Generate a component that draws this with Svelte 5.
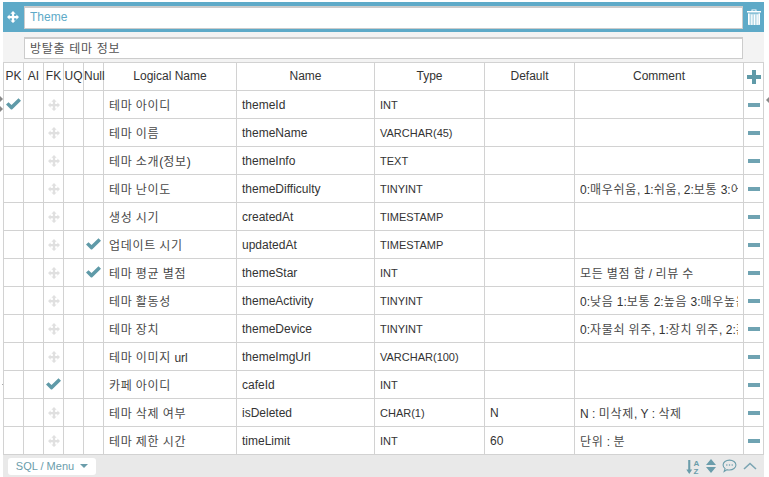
<script>
	const rows = [
		{ logical: '테마 아이디', name: 'themeId', type: 'INT', pk: true },
		{ logical: '테마 이름', name: 'themeName', type: 'VARCHAR(45)' },
		{ logical: '테마 소개(정보)', name: 'themeInfo', type: 'TEXT' },
		{ logical: '테마 난이도', name: 'themeDifficulty', type: 'TINYINT', comment: '0:매우쉬움, 1:쉬움, 2:보통 3:어려움, 4:매우어려움' },
		{ logical: '생성 시기', name: 'createdAt', type: 'TIMESTAMP' },
		{ logical: '업데이트 시기', name: 'updatedAt', type: 'TIMESTAMP', nullable: true },
		{ logical: '테마 평균 별점', name: 'themeStar', type: 'INT', nullable: true, comment: '모든 별점 합 / 리뷰 수' },
		{ logical: '테마 활동성', name: 'themeActivity', type: 'TINYINT', comment: '0:낮음 1:보통 2:높음 3:매우높음' },
		{ logical: '테마 장치', name: 'themeDevice', type: 'TINYINT', comment: '0:자물쇠 위주, 1:장치 위주, 2:혼합' },
		{ logical: '테마 이미지 url', name: 'themeImgUrl', type: 'VARCHAR(100)' },
		{ logical: '카페 아이디', name: 'cafeId', type: 'INT', fk: true },
		{ logical: '테마 삭제 여부', name: 'isDeleted', type: 'CHAR(1)', def: 'N', comment: 'N : 미삭제, Y : 삭제' },
		{ logical: '테마 제한 시간', name: 'timeLimit', type: 'INT', def: '60', comment: '단위 : 분' }
	];
	const move = 'M8 0 11.5 3.5H9.500V6.500H12.500V4.500L16 8 12.500 11.500V9.500H9.500V12.500H11.500L8 16 4.500 12.500H6.500V9.500H3.500V11.500L0 8 3.500 4.500V6.500H6.500V3.500H4.500Z';
	const check = 'M.5 8.600 3 6.200 6 9 13 2.200 15.500 4.700 6.800 13.200Q6 14 5.200 13.200Z';

	// hangul runs are set a little wider than the latin around them
	const runs = (s) => s.split(/([가-힣]+)/).filter(Boolean);
	const isKo = (s) => /[가-힣]/.test(s);
</script>

{#snippet mixed(s)}
	{#each runs(s) as part}{#if isKo(part)}<span class="ko">{part}</span>{:else}{part}{/if}{/each}
{/snippet}

<div class="page">
	<div class="table-box">
		<div class="title-bar">
			<svg class="title-move" viewBox="0 0 16 16"><path d={move} /></svg>
			<input class="title-input" value="Theme" />
			<svg class="trash" viewBox="0 0 14 16">
				<path fill-rule="evenodd" d="M4.500 2V.5H9.500V2H14V3.500H0V2ZM5.500 2H8.500V1.300H5.500Z" />
				<path d="M1 4.500H13V15Q13 16 12 16H2Q1 16 1 15Z" opacity=".55" />
				<path d="M1 4.500H2.500V16H2Q1 16 1 15ZM4.200 5.500H5.400V16H4.200ZM6.900 5.500H8.100V16H6.900ZM9.600 5.500H10.800V16H9.600ZM11.500 4.500H13V15Q13 16 12 16H11.500Z" />
			</svg>
		</div>
		<div class="comment-bar">
			<input class="comment-input" value="방탈출 테마 정보" />
		</div>
		<table>
			<colgroup>
				<col class="w20" /><col class="w20" /><col class="w20" /><col class="w20" /><col class="w20" />
				<col class="w133" /><col class="w138" /><col class="w110" /><col class="w90" /><col class="w169" /><col class="w20" />
			</colgroup>
			<thead>
				<tr>
					<th>PK</th><th>AI</th><th>FK</th><th>UQ</th><th>Null</th>
					<th>Logical Name</th><th>Name</th><th>Type</th><th>Default</th><th>Comment</th>
					<th class="add">
						<svg class="plus" viewBox="0 0 14 14"><path d="M5 0H9V5H14V9H9V14H5V9H0V5H5Z" /></svg>
					</th>
				</tr>
			</thead>
			<tbody>
				{#each rows as row}
					<tr>
						<td class="mark">
							{#if row.pk}<svg class="check" viewBox="0.5 1 16 16"><path d={check} /></svg>{/if}
						</td>
						<td></td>
						<td class="mark">
							{#if row.fk}
								<svg class="check" viewBox="0.5 1 16 16"><path d={check} /></svg>
							{:else}
								<svg class="faint" viewBox="0 0 16 16"><path d={move} /></svg>
							{/if}
						</td>
						<td></td>
						<td class="mark">
							{#if row.nullable}<svg class="check" viewBox="0.5 1 16 16"><path d={check} /></svg>{/if}
						</td>
						<td class="text">{@render mixed(row.logical)}</td>
						<td class="text">{row.name}</td>
						<td class="text type">{row.type}</td>
						<td class="text">{row.def ?? ''}</td>
						<td class="text"><div class="clip">{@render mixed(row.comment ?? '')}</div></td>
						<td class="mark"><span class="minus"></span></td>
					</tr>
				{/each}
			</tbody>
		</table>
		<div class="footer">
			<button class="menu-btn">SQL / Menu <span class="caret"></span></button>
			<div class="tools">
				<svg class="sort" viewBox="0 0 14 15">
					<path d="M2.200 1H4.300V10.500H6.200L3.250 15 .3 10.500H2.200Z" />
					<text x="7.500" y="6.700">A</text>
					<text x="7.500" y="14.700">Z</text>
				</svg>
				<svg class="updown" viewBox="0 0 10 14"><path d="M5 0 10 6H0ZM0 8H10L5 14Z" /></svg>
				<svg class="bubble" viewBox="0 0 14 13">
					<path d="M7 1C10.300 1 13 3 13 5.600S10.300 10.200 7 10.200C6.200 10.200 5.500 10.100 4.800 9.900L2 11.600 2.900 8.900C1.700 8 1 6.900 1 5.600 1 3 3.700 1 7 1Z" />
					<circle cx="4.500" cy="5.600" r=".7" /><circle cx="7" cy="5.600" r=".7" /><circle cx="9.500" cy="5.600" r=".7" />
				</svg>
				<svg class="chevron" viewBox="0 0 14 8"><path d="M1 7 7 1.500 13 7" /></svg>
			</div>
		</div>
	</div>
	<span class="handle left a"></span>
	<span class="handle left b"></span>
	<span class="handle right"></span>
	<span class="tick"></span>
</div>

<style>
	:global(body) {
		background: #fff;
		overflow: hidden;
	}

	.page {
		position: relative;
		width: 769px;
		height: 477px;
		padding: 2px 0 0 3px;
		box-sizing: border-box;
		font-family: 'Liberation Sans', 'Noto Sans CJK KR', sans-serif;
		font-size: 12px;
		color: #333;
		overflow: hidden;
	}

	.table-box {
		width: 761px;
		height: 475px;
		display: flex;
		flex-direction: column;
		background: #f3f3f3;
	}

	.title-bar {
		height: 30px;
		flex: none;
		display: flex;
		align-items: center;
		background: #5eaac8;
		box-sizing: border-box;
	}

	.title-move {
		width: 12px;
		height: 12px;
		margin: 0 5px 0 4px;
		fill: #fff;
	}

	.title-input {
		width: 719px;
		height: 23px;
		box-sizing: border-box;
		border: 1px solid #ccc;
		border-width: 2px 1px 1px 1px;
		padding: 0 5px 2px;
		font: inherit;
		font-size: 12px;
		color: #5eaac8;
		background: #fff;
		outline: none;
	}

	.trash {
		width: 14px;
		height: 16px;
		margin-left: 4px;
		fill: #fff;
	}

	.comment-bar {
		height: 30px;
		flex: none;
		display: flex;
		align-items: center;
		padding: 1px 0 0 21px;
		box-sizing: border-box;
	}

	.comment-input {
		width: 719px;
		height: 22px;
		box-sizing: border-box;
		border: 1px solid #ccc;
		border-width: 2px 1px 1px 1px;
		padding: 0 5px 2px;
		font: inherit;
		letter-spacing: 0.7px;
		color: #555;
		background: #fff;
		outline: none;
	}

	table {
		border-collapse: collapse;
		table-layout: fixed;
		width: 760px;
		background: #fff;
	}

	.w20 { width: 20px; }
	.w133 { width: 133px; }
	.w138 { width: 138px; }
	.w110 { width: 110px; }
	.w90 { width: 90px; }
	.w169 { width: 169px; }

	th, td {
		height: 27px;
		padding: 0;
		border: 1px solid #d2d2d2;
		box-sizing: border-box;
		font-weight: 400;
		white-space: nowrap;
	}

	th {
		height: 28px;
		padding-bottom: 2px;
		text-align: center;
		font-size: 12px;
		color: #333;
	}

	th.add {
		padding-bottom: 0;
	}

	tr {
		height: 28px;
	}

	td.text {
		padding-left: 5px;
		padding-right: 5px;
		overflow: hidden;
	}

	.clip {
		overflow: hidden;
	}

	td.type {
		font-size: 11px;
	}

	.ko {
		letter-spacing: 0.7px;
		color: #4a4a4a;
	}

	td.mark {
		text-align: center;
		line-height: 0;
	}

	.check {
		width: 16px;
		height: 16px;
		fill: #5f9aa8;
	}

	.faint {
		width: 12px;
		height: 12px;
		fill: #e0e0e0;
	}

	.plus {
		width: 14px;
		height: 14px;
		fill: #5f9aa8;
		vertical-align: middle;
	}

	.minus {
		display: inline-block;
		width: 12px;
		height: 4px;
		background: #6fa3b2;
	}

	.footer {
		flex: 1;
		display: flex;
		align-items: center;
		justify-content: space-between;
		background: #e9e9e9;
		padding: 0 7px 0 5px;
	}

	.menu-btn {
		height: 17px;
		width: 88px;
		border: 0;
		border-radius: 3px;
		background: #fff;
		font: inherit;
		font-size: 11px;
		color: #6b9dab;
		padding: 0;
		display: flex;
		align-items: center;
		justify-content: center;
		gap: 4px;
	}

	.caret {
		width: 0;
		height: 0;
		border: 4px solid transparent;
		border-top: 4px solid #6b9dab;
		border-bottom: 0;
		margin-left: 2px;
	}

	.tools {
		display: flex;
		align-items: center;
		gap: 6px;
	}

	.sort {
		width: 14px;
		height: 15px;
		fill: #6b9dab;
	}

	.sort text {
		font-size: 8px;
		font-weight: 700;
	}

	.updown {
		width: 10px;
		height: 14px;
		fill: #6b9dab;
	}

	.bubble {
		width: 15px;
		height: 14px;
		fill: none;
		stroke: #6b9dab;
	}

	.bubble circle {
		fill: #6b9dab;
		stroke: none;
	}

	.chevron {
		width: 14px;
		height: 8px;
		fill: none;
		stroke: #7ba5b3;
		stroke-width: 1.6;
	}

	.handle {
		position: absolute;
		width: 0;
		height: 0;
		border: 3px solid transparent;
	}

	.handle.left {
		left: 0;
		border-left-color: #888;
	}

	.handle.left.a {
		top: 96px;
	}

	.handle.left.b {
		top: 106px;
	}

	.handle.right {
		top: 97px;
		left: 763px;
		border-right-color: #888;
	}

	.tick {
		position: absolute;
		left: 2px;
		top: 384px;
		width: 1px;
		height: 1px;
		background: #aaa;
	}
</style>
